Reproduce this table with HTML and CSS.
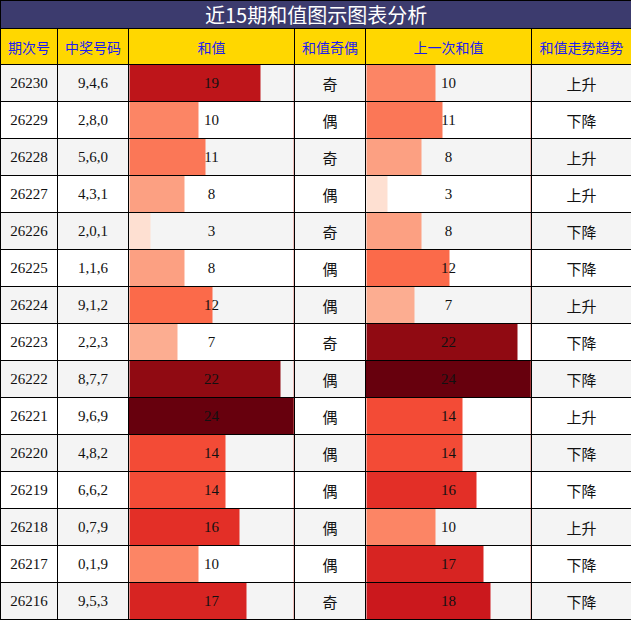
FILE: index.html
```html
<!DOCTYPE html>
<html lang="zh">
<head>
<meta charset="utf-8">
<title>近15期和值图示图表分析</title>
<link rel="stylesheet" href="styles.css">
</head>
<body>
<table class="chart">
  <colgroup>
    <col class="c-issue"><col class="c-num"><col class="c-bar"><col class="c-oe"><col class="c-bar"><col class="c-trend">
  </colgroup>
  <thead>
    <tr class="title-row"><th colspan="6">近15期和值图示图表分析</th></tr>
    <tr class="head-row">
      <th>期次号</th><th>中奖号码</th><th>和值</th><th>和值奇偶</th><th>上一次和值</th><th>和值走势趋势</th>
    </tr>
  </thead>
  <tbody>
    <tr><td class="num">26230</td><td class="num">9,4,6</td><td class="bar" style="--w:79.17%;--c:#be151a">19</td><td class="cjk">奇</td><td class="bar" style="--w:41.67%;--c:#fc8565">10</td><td class="cjk">上升</td></tr>
    <tr><td class="num">26229</td><td class="num">2,8,0</td><td class="bar" style="--w:41.67%;--c:#fc8565">10</td><td class="cjk">偶</td><td class="bar" style="--w:45.83%;--c:#fb7757">11</td><td class="cjk">下降</td></tr>
    <tr><td class="num">26228</td><td class="num">5,6,0</td><td class="bar" style="--w:45.83%;--c:#fb7757">11</td><td class="cjk">奇</td><td class="bar" style="--w:33.33%;--c:#fca082">8</td><td class="cjk">上升</td></tr>
    <tr><td class="num">26227</td><td class="num">4,3,1</td><td class="bar" style="--w:33.33%;--c:#fca082">8</td><td class="cjk">偶</td><td class="bar" style="--w:12.5%;--c:#fee0d2">3</td><td class="cjk">上升</td></tr>
    <tr><td class="num">26226</td><td class="num">2,0,1</td><td class="bar" style="--w:12.5%;--c:#fee0d2">3</td><td class="cjk">奇</td><td class="bar" style="--w:33.33%;--c:#fca082">8</td><td class="cjk">下降</td></tr>
    <tr><td class="num">26225</td><td class="num">1,1,6</td><td class="bar" style="--w:33.33%;--c:#fca082">8</td><td class="cjk">偶</td><td class="bar" style="--w:50%;--c:#fb6a4a">12</td><td class="cjk">下降</td></tr>
    <tr><td class="num">26224</td><td class="num">9,1,2</td><td class="bar" style="--w:50%;--c:#fb6a4a">12</td><td class="cjk">偶</td><td class="bar" style="--w:29.17%;--c:#fcad91">7</td><td class="cjk">上升</td></tr>
    <tr><td class="num">26223</td><td class="num">2,2,3</td><td class="bar" style="--w:29.17%;--c:#fcad91">7</td><td class="cjk">奇</td><td class="bar" style="--w:91.67%;--c:#900a12">22</td><td class="cjk">下降</td></tr>
    <tr><td class="num">26222</td><td class="num">8,7,7</td><td class="bar" style="--w:91.67%;--c:#900a12">22</td><td class="cjk">偶</td><td class="bar" style="--w:100%;--c:#67000d">24</td><td class="cjk">下降</td></tr>
    <tr><td class="num">26221</td><td class="num">9,6,9</td><td class="bar" style="--w:100%;--c:#67000d">24</td><td class="cjk">偶</td><td class="bar" style="--w:58.33%;--c:#f34b36">14</td><td class="cjk">上升</td></tr>
    <tr><td class="num">26220</td><td class="num">4,8,2</td><td class="bar" style="--w:58.33%;--c:#f34b36">14</td><td class="cjk">偶</td><td class="bar" style="--w:58.33%;--c:#f34b36">14</td><td class="cjk">下降</td></tr>
    <tr><td class="num">26219</td><td class="num">6,6,2</td><td class="bar" style="--w:58.33%;--c:#f34b36">14</td><td class="cjk">偶</td><td class="bar" style="--w:66.67%;--c:#e32f27">16</td><td class="cjk">下降</td></tr>
    <tr><td class="num">26218</td><td class="num">0,7,9</td><td class="bar" style="--w:66.67%;--c:#e32f27">16</td><td class="cjk">偶</td><td class="bar" style="--w:41.67%;--c:#fc8565">10</td><td class="cjk">上升</td></tr>
    <tr><td class="num">26217</td><td class="num">0,1,9</td><td class="bar" style="--w:41.67%;--c:#fc8565">10</td><td class="cjk">偶</td><td class="bar" style="--w:70.83%;--c:#d72422">17</td><td class="cjk">下降</td></tr>
    <tr><td class="num">26216</td><td class="num">9,5,3</td><td class="bar" style="--w:70.83%;--c:#d72422">17</td><td class="cjk">奇</td><td class="bar" style="--w:75%;--c:#cb181d">18</td><td class="cjk">下降</td></tr>
  </tbody>
</table>
</body>
</html>
```

FILE: styles.css
```css
html, body {
  margin: 0;
  padding: 0;
  background: #ffffff;
}

.chart {
  border-collapse: collapse;
  table-layout: fixed;
  width: 631px;
  font-family: "Liberation Serif", "Noto Sans CJK SC", serif;
  font-size: 15px;
  color: #111111;
}

.c-issue { width: 57px; }
.c-num { width: 71px; }
.c-bar { width: 166px; }
.c-oe { width: 71px; }
.c-trend { width: 100px; }

.chart th,
.chart td {
  border: 1px solid #000000;
  padding: 0;
  text-align: center;
  overflow: hidden;
  white-space: nowrap;
}

.title-row th {
  height: 27px;
  background: #3c3b6e;
  color: #ffffff;
  font-family: "Noto Sans CJK SC", sans-serif;
  font-size: 20px;
  font-weight: normal;
  line-height: 27px;
}

.head-row th {
  height: 35px;
  background: #ffd700;
  color: #1d1df0;
  font-family: "Noto Sans CJK SC", sans-serif;
  font-size: 14px;
  font-weight: normal;
}

.chart tbody td {
  height: 36px;
}

.chart tbody tr:nth-child(odd) td {
  background-color: #f4f4f4;
}

.chart tbody tr:nth-child(even) td {
  background-color: #ffffff;
}

.chart td.cjk {
  font-family: "Noto Sans CJK SC", sans-serif;
  font-size: 15px;
}

.chart td.bar {
  background-image: linear-gradient(90deg, var(--c) var(--w), transparent var(--w));
  box-shadow: inset -1px 0 0 rgba(230, 120, 110, 0.45);
}
```
